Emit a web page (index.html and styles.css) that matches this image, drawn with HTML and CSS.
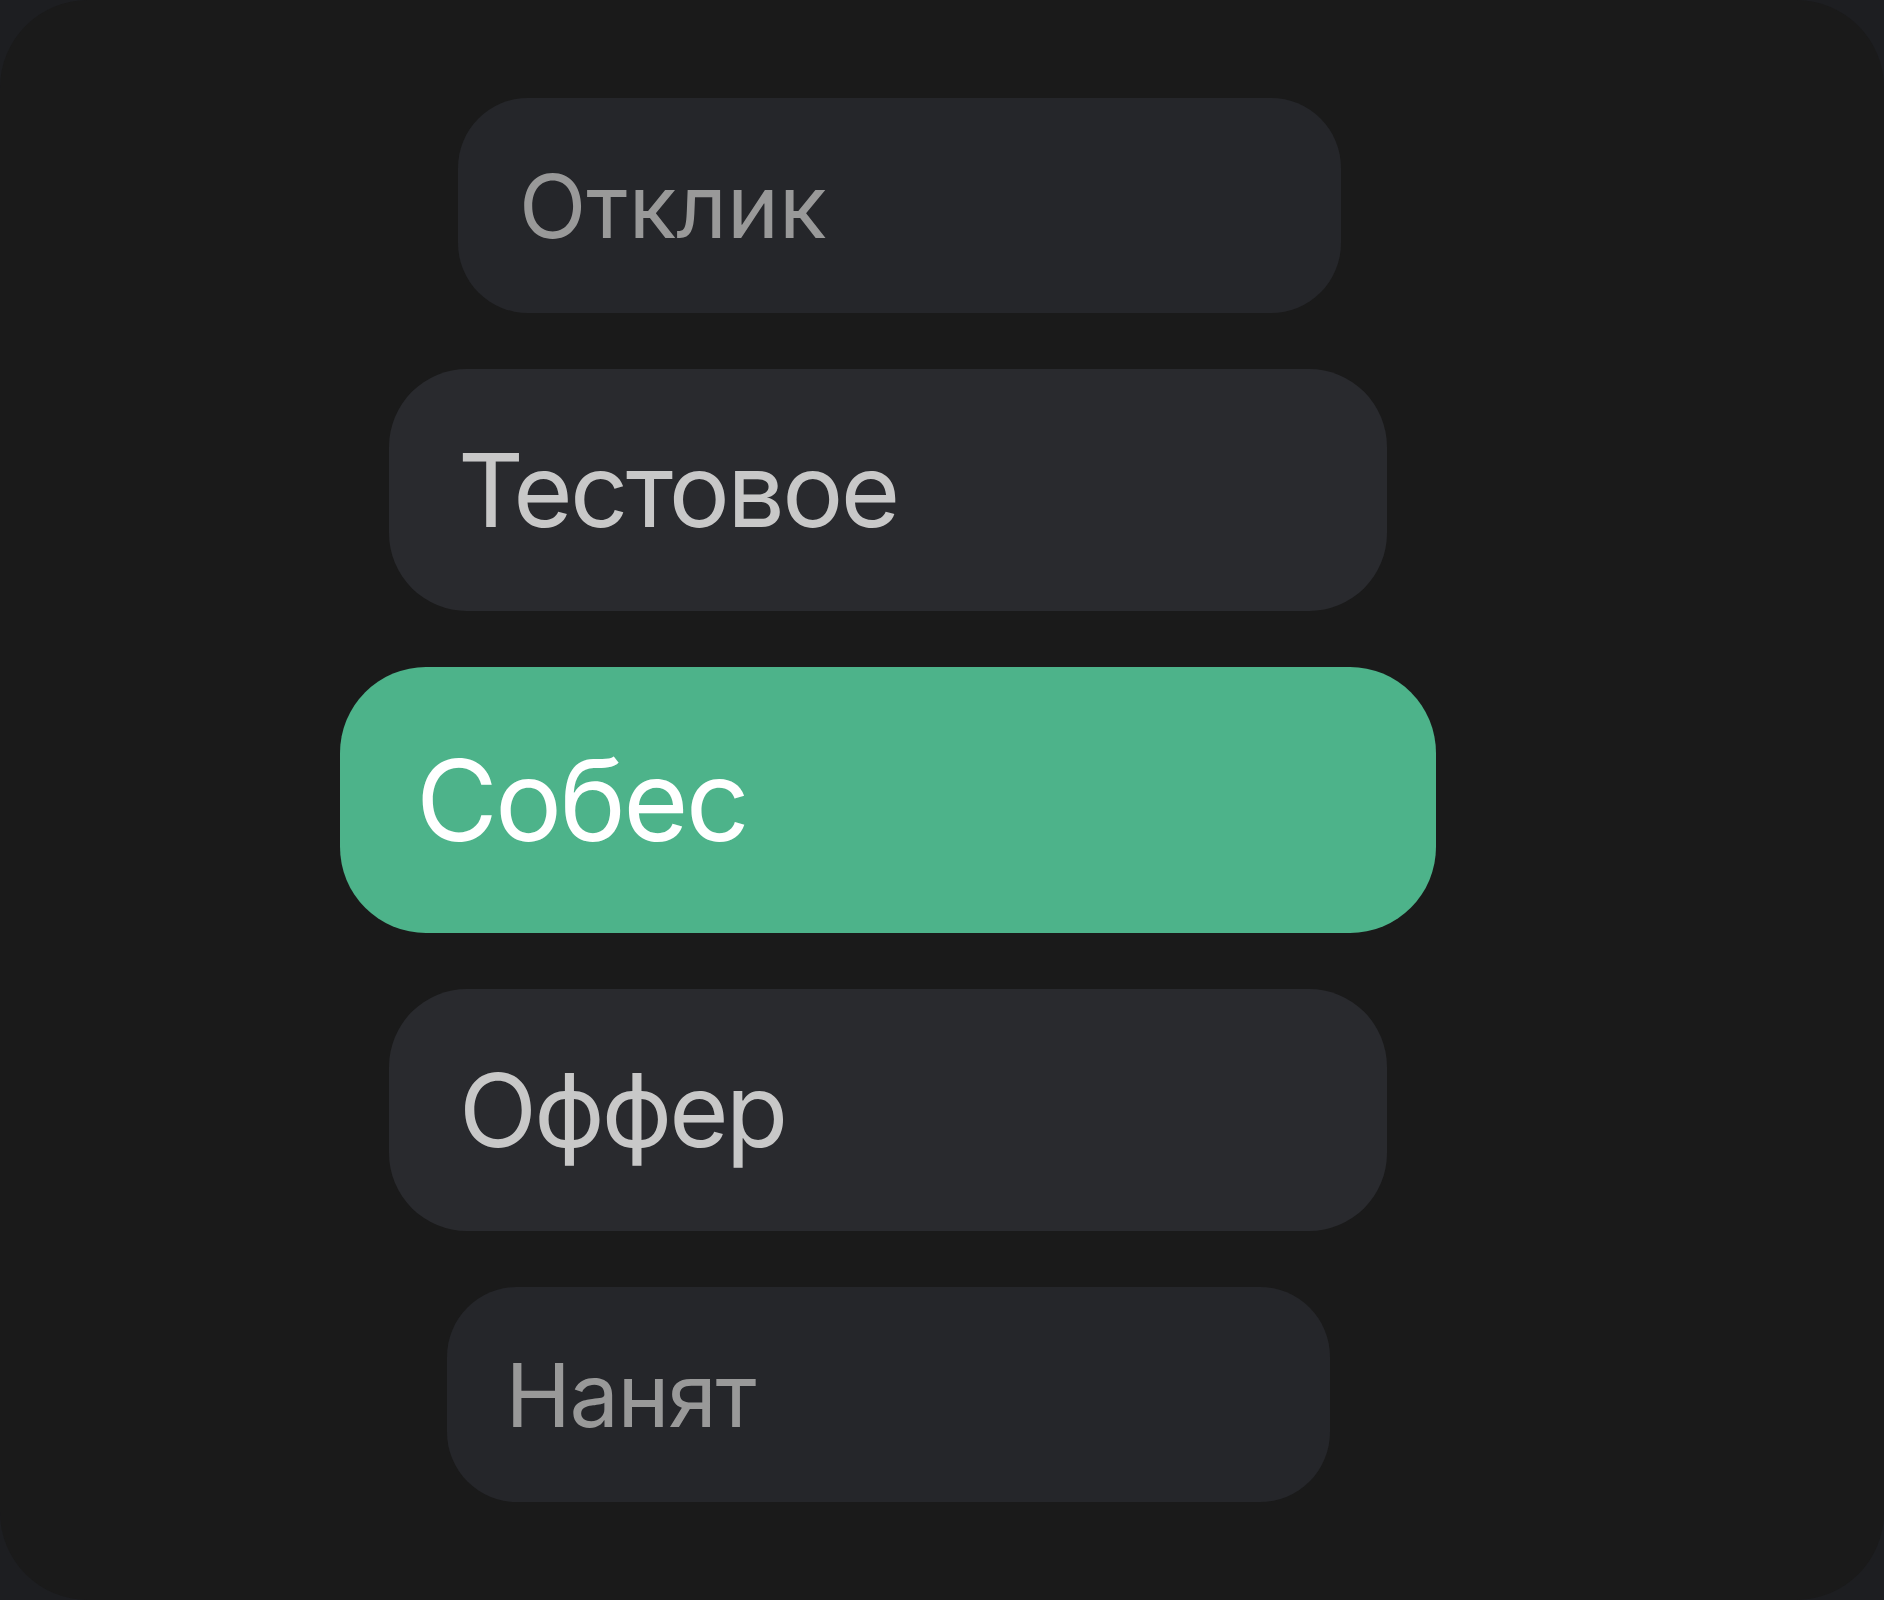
FILE: index.html
```html
<!DOCTYPE html>
<html lang="ru">
<head>
<meta charset="utf-8">
<title>Статусы</title>
<link rel="stylesheet" href="styles.css">
</head>
<body>
<main class="panel">
  <ul class="stages">
    <li class="stage far first"><span class="label">Отклик</span></li>
    <li class="stage near"><span class="label">Тестовое</span></li>
    <li class="stage active"><span class="label">Собес</span></li>
    <li class="stage near alt"><span class="label">Оффер</span></li>
    <li class="stage far last"><span class="label">Нанят</span></li>
  </ul>
</main>
</body>
</html>
```

FILE: styles.css
```css
html, body {
  margin: 0;
  padding: 0;
  background: #1d1e21;
}

.panel {
  width: 1884px;
  height: 1600px;
  box-sizing: border-box;
  background: #1a1a1a;
  border-radius: 88px;
  padding-top: 98px;
  font-family: "Inter", "Noto Sans", sans-serif;
}

.stages {
  list-style: none;
  margin: 0;
  padding: 0 108px 0 0;
  display: flex;
  flex-direction: column;
  align-items: center;
  gap: 56px;
}

.stage {
  display: flex;
  align-items: center;
  box-sizing: border-box;
}

.label {
  line-height: 1;
  white-space: nowrap;
}

.far {
  width: 883px;
  height: 215px;
  border-radius: 70px;
  background: #25262a;
  color: #999999;
  font-size: 88px;
  letter-spacing: -0.008em;
  padding-left: 61px;
}

.far.first {
  margin-left: 23px;
  letter-spacing: 0;
}

.far.last {
  padding-left: 59px;
  letter-spacing: -0.016em;
}

.near {
  width: 998px;
  height: 242px;
  border-radius: 78px;
  background: #292a2e;
  color: #c8c8c8;
  font-size: 102px;
  letter-spacing: -0.026em;
  padding-left: 69px;
}

.near.alt {
  padding-left: 70px;
  letter-spacing: -0.028em;
}

.active {
  width: 1096px;
  height: 266px;
  border-radius: 86px;
  background: #4db38a;
  color: #ffffff;
  font-size: 112px;
  letter-spacing: -0.024em;
  padding-left: 76px;
}
```
